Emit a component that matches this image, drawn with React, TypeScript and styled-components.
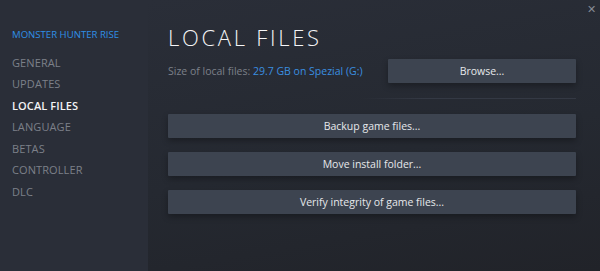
import React from "react";
import styled, { createGlobalStyle } from "styled-components";

const Global = createGlobalStyle`
  html, body { margin: 0; padding: 0; background: #262a33; }
  body { font-family: "Open Sans", "Liberation Sans", sans-serif; }
  #root { width: 600px; height: 271px; }
`;

const Window = styled.div`
  width: 600px;
  height: 271px;
  display: grid;
  grid-template-columns: 148px 1fr;
  position: relative;
  overflow: hidden;
`;

const Sidebar = styled.nav`
  background: #2a2e38;
  padding: 28px 0 0 12px;
  display: flex;
  flex-direction: column;
`;

const GameTitle = styled.div`
  color: #2f8fe6;
  font-size: 9.6px;
  line-height: 14px;
  margin-bottom: 10px;
`;

const NavItem = styled.div<{ $active?: boolean }>`
  color: ${(p) => (p.$active ? "#f2f3f5" : "#7c8089")};
  font-weight: ${(p) => (p.$active ? 600 : 400)};
  font-size: 11px;
  line-height: 14px;
  height: 21.5px;
  display: flex;
  align-items: center;
  letter-spacing: 0.1px;
`;

const Main = styled.main`
  background: linear-gradient(170deg, #2a2e38 0%, #252931 55%, #212329 100%);
  padding: 22px 24px 0 20px;
  display: flex;
  flex-direction: column;
`;

const Title = styled.h1`
  margin: 0;
  color: #f4f5f7;
  font-weight: 300;
  font-size: 22px;
  line-height: 30px;
  letter-spacing: 2.7px;
`;

const SizeRow = styled.div`
  display: flex;
  align-items: center;
  justify-content: space-between;
  margin-top: 7px;
`;

const SizeText = styled.div`
  color: #7c8089;
  font-size: 10.5px;
  span { color: #3a8fe0; }
`;

const Button = styled.button<{ $wide?: boolean }>`
  width: ${(p) => (p.$wide ? "408px" : "188px")};
  height: 24px;
  border: none;
  border-radius: 1px;
  background: #3d4450;
  color: #e6e8eb;
  font-family: "Open Sans", "Liberation Sans", sans-serif;
  font-size: 10.5px;
  box-shadow: 0 3px 6px rgba(0, 0, 0, 0.3);
  padding: 0;
  cursor: pointer;
`;

const Separator = styled.div`
  height: 1px;
  margin: 15px 0 15px 192px;
  background: linear-gradient(90deg, rgba(60,66,78,0) 0%, #343944 30%, #343944 100%);
`;

const Actions = styled.div`
  display: flex;
  flex-direction: column;
  gap: 14px;
`;

const Close = styled.div`
  position: absolute;
  top: 3px;
  right: 4px;
  color: #858a94;
  font-size: 11px;
  line-height: 11px;
`;

export default function App() {
  return (
    <>
      <Global />
      <Window>
        <Sidebar>
          <GameTitle>MONSTER HUNTER RISE</GameTitle>
          <NavItem>GENERAL</NavItem>
          <NavItem>UPDATES</NavItem>
          <NavItem $active>LOCAL FILES</NavItem>
          <NavItem>LANGUAGE</NavItem>
          <NavItem>BETAS</NavItem>
          <NavItem>CONTROLLER</NavItem>
          <NavItem>DLC</NavItem>
        </Sidebar>
        <Main>
          <Title>LOCAL FILES</Title>
          <SizeRow>
            <SizeText>
              Size of local files: <span>29.7 GB on Spezial (G:)</span>
            </SizeText>
            <Button>Browse...</Button>
          </SizeRow>
          <Separator />
          <Actions>
            <Button $wide>Backup game files...</Button>
            <Button $wide>Move install folder...</Button>
            <Button $wide>Verify integrity of game files...</Button>
          </Actions>
        </Main>
        <Close>✕</Close>
      </Window>
    </>
  );
}
